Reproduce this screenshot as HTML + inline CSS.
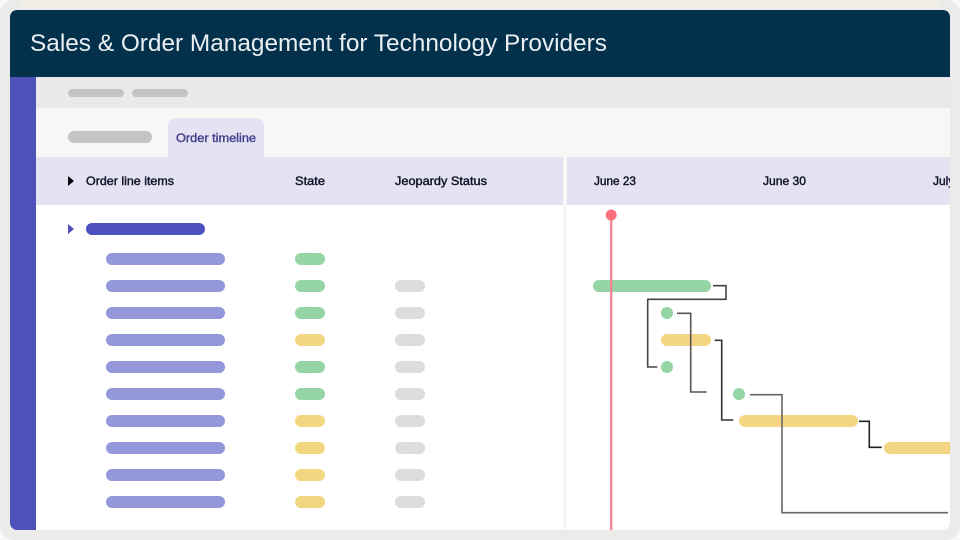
<!DOCTYPE html>
<html lang="en">
<head>
<meta charset="utf-8">
<title>Sales &amp; Order Management for Technology Providers</title>
<style>
html,body{margin:0;padding:0;width:960px;height:540px;overflow:hidden;background:#f8f8f6}
svg{display:block;filter:blur(.3px)}
text{font-family:"Liberation Sans",sans-serif}
.h{font-size:12px;fill:#12122a;stroke:#12122a;stroke-width:.42}
</style>
</head>
<body>
<svg width="960" height="540" viewBox="0 0 960 540" xmlns="http://www.w3.org/2000/svg">
<defs>
<clipPath id="card"><rect x="10" y="10" width="940" height="520" rx="7"/></clipPath>
</defs>
<rect width="960" height="540" fill="#f8f8f6"/>
<rect x="0" y="0" width="960" height="540" rx="14" fill="#ebebe9"/>
<rect x="20" y="0" width="920" height="8" fill="#f0ece6"/>
<g clip-path="url(#card)">
<rect x="10" y="10" width="940" height="520" fill="#fff"/>
<rect x="10" y="10" width="940" height="67" fill="#03304a"/>
<rect x="10" y="77" width="26" height="453" fill="#4e52b8"/>
<rect x="36" y="77" width="914" height="31" fill="#e9e9eb"/>
<rect x="36" y="108" width="914" height="49" fill="#f7f7f6"/>
<rect x="36" y="157" width="914" height="48" fill="#e3e3f2"/>
<rect x="563" y="157" width="4" height="373" fill="#f7f7f8"/>
<rect x="68" y="89" width="56" height="8" rx="4" fill="#c4c4c4"/>
<rect x="132" y="89" width="56" height="8" rx="4" fill="#c4c4c4"/>
<rect x="68" y="131" width="84" height="12" rx="6" fill="#c4c4c4"/>
<path d="M168 157V126a8 8 0 0 1 8-8h80a8 8 0 0 1 8 8v31z" fill="#e5e3f3"/>
<text x="176" y="142" font-size="11.5" fill="#46408c" stroke="#46408c" stroke-width=".4" textLength="80" lengthAdjust="spacingAndGlyphs">Order timeline</text>
<text x="30" y="51" font-size="24" fill="#e9eff3" textLength="577" lengthAdjust="spacingAndGlyphs">Sales &amp; Order Management for Technology Providers</text>

<path d="M68 176l6 5-6 5z" fill="#0b0b14"/>
<text class="h" x="86" y="185" textLength="88" lengthAdjust="spacingAndGlyphs">Order line items</text>
<text class="h" x="295" y="185" textLength="30" lengthAdjust="spacingAndGlyphs">State</text>
<text class="h" x="395" y="185" textLength="92" lengthAdjust="spacingAndGlyphs">Jeopardy Status</text>
<text class="h" x="594" y="185" textLength="42" lengthAdjust="spacingAndGlyphs">June 23</text>
<text class="h" x="763" y="185" textLength="43" lengthAdjust="spacingAndGlyphs">June 30</text>
<text class="h" x="933" y="185">July</text>

<path d="M68 224l6 5-6 5z" fill="#4e52b8"/>
<rect x="86" y="223" width="119" height="12" rx="6" fill="#4e52c0"/>

<g fill="#9498da">
<rect x="106" y="253" width="119" height="12" rx="6"/>
<rect x="106" y="280" width="119" height="12" rx="6"/>
<rect x="106" y="307" width="119" height="12" rx="6"/>
<rect x="106" y="334" width="119" height="12" rx="6"/>
<rect x="106" y="361" width="119" height="12" rx="6"/>
<rect x="106" y="388" width="119" height="12" rx="6"/>
<rect x="106" y="415" width="119" height="12" rx="6"/>
<rect x="106" y="442" width="119" height="12" rx="6"/>
<rect x="106" y="469" width="119" height="12" rx="6"/>
<rect x="106" y="496" width="119" height="12" rx="6"/>
</g>
<g fill="#95d5a5">
<rect x="295" y="253" width="30" height="12" rx="6"/>
<rect x="295" y="280" width="30" height="12" rx="6"/>
<rect x="295" y="307" width="30" height="12" rx="6"/>
<rect x="295" y="361" width="30" height="12" rx="6"/>
<rect x="295" y="388" width="30" height="12" rx="6"/>
</g>
<g fill="#f2d780">
<rect x="295" y="334" width="30" height="12" rx="6"/>
<rect x="295" y="415" width="30" height="12" rx="6"/>
<rect x="295" y="442" width="30" height="12" rx="6"/>
<rect x="295" y="469" width="30" height="12" rx="6"/>
<rect x="295" y="496" width="30" height="12" rx="6"/>
</g>
<g fill="#dddddd">
<rect x="395" y="280" width="30" height="12" rx="6"/>
<rect x="395" y="307" width="30" height="12" rx="6"/>
<rect x="395" y="334" width="30" height="12" rx="6"/>
<rect x="395" y="361" width="30" height="12" rx="6"/>
<rect x="395" y="388" width="30" height="12" rx="6"/>
<rect x="395" y="415" width="30" height="12" rx="6"/>
<rect x="395" y="442" width="30" height="12" rx="6"/>
<rect x="395" y="469" width="30" height="12" rx="6"/>
<rect x="395" y="496" width="30" height="12" rx="6"/>
</g>

<rect x="593" y="280" width="118" height="12" rx="6" fill="#95d5a5"/>
<circle cx="667" cy="313" r="6" fill="#95d5a5"/>
<rect x="661" y="334" width="50" height="12" rx="6" fill="#f4d682"/>
<circle cx="667" cy="367" r="6" fill="#95d5a5"/>
<circle cx="739" cy="394" r="6" fill="#95d5a5"/>
<rect x="739" y="415" width="119" height="12" rx="6" fill="#f4d682"/>
<rect x="884" y="442" width="80" height="12" rx="6" fill="#f4d682"/>

<g fill="none" stroke-width="1.6">
<path d="M713 285.7H726V299.3H647.7V367H657.3" stroke="#444"/>
<path d="M677 313.3H690.7V392H706.7" stroke="#555"/>
<path d="M714.7 340.3H721.7V420H733.3" stroke="#333"/>
<path d="M750 394.7H782V512.7H948" stroke="#666"/>
<path d="M859 421.3H869.3V447.3H881.7" stroke="#222"/>
</g>
<rect x="610" y="215" width="2.4" height="315" fill="#f5818e" fill-opacity=".95"/>
<circle cx="611.2" cy="215" r="5.5" fill="#fb6f7e"/>
</g>
</svg>
</body>
</html>
